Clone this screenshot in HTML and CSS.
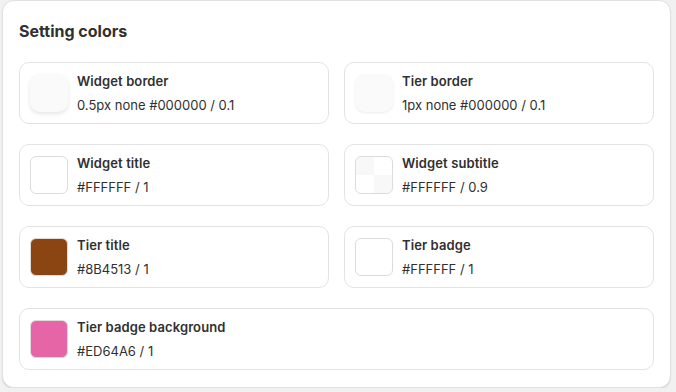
FILE: index.html
```html
<!DOCTYPE html>
<html>

<head>
    <meta charset="utf-8">
    <title>Setting colors</title>
    <link rel="stylesheet" href="styles.css">
</head>

<body>
    <div class="panel">
        <h2>Setting colors</h2>
        <div class="grid">
            <div class="item">
                <div class="swatch swatch-border"></div>
                <div class="info">
                    <div class="name">Widget border</div>
                    <div class="value">0.5px none #000000 / 0.1</div>
                </div>
            </div>
            <div class="item">
                <div class="swatch swatch-border light"></div>
                <div class="info">
                    <div class="name">Tier border</div>
                    <div class="value">1px none #000000 / 0.1</div>
                </div>
            </div>
            <div class="item">
                <div class="swatch" style="background-color: #FFFFFF"></div>
                <div class="info">
                    <div class="name">Widget title</div>
                    <div class="value">#FFFFFF / 1</div>
                </div>
            </div>
            <div class="item">
                <div class="swatch checker"></div>
                <div class="info">
                    <div class="name">Widget subtitle</div>
                    <div class="value">#FFFFFF / 0.9</div>
                </div>
            </div>
            <div class="item">
                <div class="swatch" style="background-color: #8B4513"></div>
                <div class="info">
                    <div class="name">Tier title</div>
                    <div class="value">#8B4513 / 1</div>
                </div>
            </div>
            <div class="item">
                <div class="swatch" style="background-color: #FFFFFF"></div>
                <div class="info">
                    <div class="name">Tier badge</div>
                    <div class="value">#FFFFFF / 1</div>
                </div>
            </div>
            <div class="item wide">
                <div class="swatch" style="background-color: #E565A6"></div>
                <div class="info">
                    <div class="name">Tier badge background</div>
                    <div class="value">#ED64A6 / 1</div>
                </div>
            </div>
        </div>
    </div>
</body>

</html>
```

FILE: styles.css
```css
* {
    box-sizing: border-box;
    margin: 0;
    padding: 0;
}

body {
    background-color: #f1f1f1;
    font-family: Inter, "Noto Sans", sans-serif;
    color: #303030;
    padding: 0 5px 0 2px;
}

.panel {
    background-color: #fff;
    border: 1px solid #e1e1e1;
    border-radius: 12px;
    box-shadow: 0 1px 1px rgba(0, 0, 0, 0.12);
    padding: 18px 16px 17px;
}

h2 {
    font-size: 16px;
    font-weight: 700;
    line-height: 24px;
    margin-bottom: 19px;
}

.grid {
    display: grid;
    grid-template-columns: 1fr 1fr;
    column-gap: 15px;
    row-gap: 20px;
}

.item {
    align-items: center;
    border: 1px solid #e3e3e3;
    border-radius: 10px;
    display: flex;
    gap: 9px;
    height: 62px;
    padding: 0 10px;
}

.item.wide {
    grid-column: 1 / 3;
}

.swatch {
    border: 1px solid #dcdcdc;
    border-radius: 6px;
    flex-shrink: 0;
    height: 38px;
    width: 38px;
}

.swatch-border {
    background-color: #fafafa;
    border: none;
    border-radius: 10px;
    box-shadow: 0 2px 4px rgba(0, 0, 0, 0.1);
}

.swatch-border.light {
    box-shadow: 0 1px 3px rgba(0, 0, 0, 0.08);
}

.checker {
    background: conic-gradient(#fff 0 25%, #f8f8f8 0 50%, #fff 0 75%, #f8f8f8 0) 0 0 / 100% 100%;
}

.info {
    display: flex;
    flex-direction: column;
    gap: 4px;
}

.name {
    font-size: 13px;
    font-weight: 600;
    line-height: 20px;
    letter-spacing: 0.1px;
}

.value {
    font-size: 13px;
    line-height: 20px;
}
```
